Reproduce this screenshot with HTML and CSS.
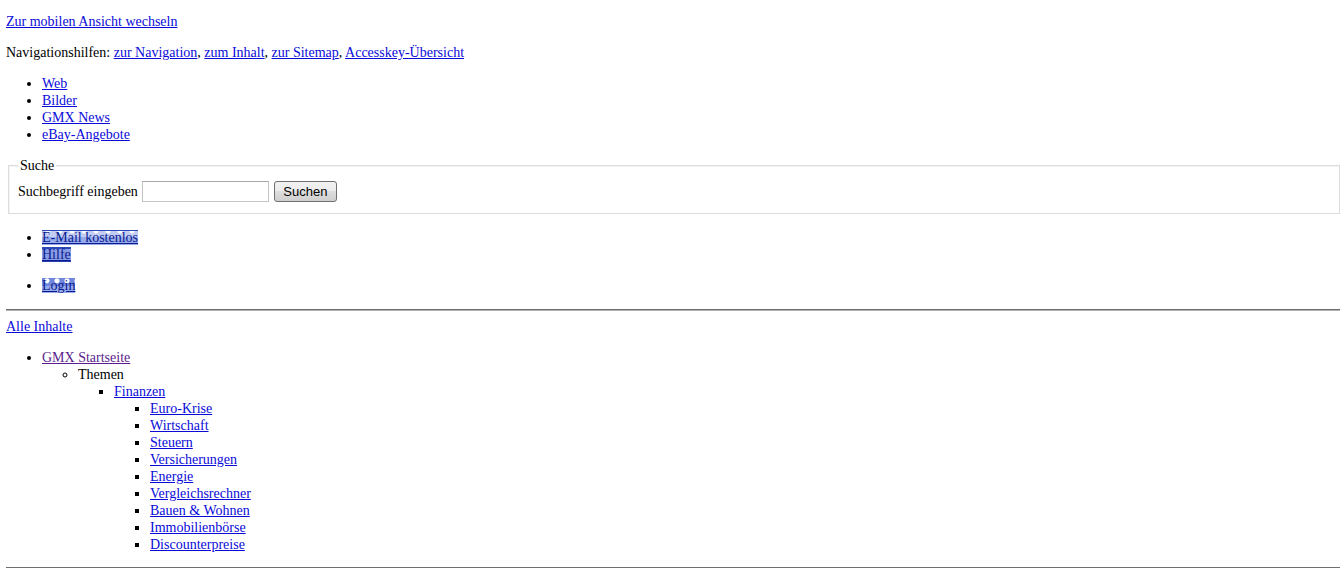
FILE: index.html
```html
<!DOCTYPE html>
<html lang="de">
<head>
<meta charset="utf-8">
<title>GMX</title>
<link rel="stylesheet" href="styles.css">
</head>
<body>
<p class="first"><a href="#">Zur mobilen Ansicht wechseln</a></p>
<p>Navigationshilfen: <a href="#">zur Navigation</a>, <a href="#">zum Inhalt</a>, <a href="#">zur Sitemap</a>, <a href="#">Accesskey-Übersicht</a></p>
<ul>
  <li><a href="#">Web</a></li>
  <li><a href="#">Bilder</a></li>
  <li><a href="#">GMX News</a></li>
  <li><a href="#">eBay-Angebote</a></li>
</ul>
<fieldset class="search">
  <legend>Suche</legend>
  <label for="q">Suchbegriff eingeben</label> <input id="q" class="search-input" type="text"> <button class="search-btn" type="button">Suchen</button>
</fieldset>
<ul class="service">
  <li><a class="sprite" href="#">E-Mail kostenlos</a></li>
  <li><a class="sprite dark" href="#">Hilfe</a></li>
</ul>
<ul>
  <li><a class="sprite dots" href="#">Login</a></li>
</ul>
<hr>
<p class="all"><a href="#">Alle Inhalte</a></p>
<ul>
  <li><a class="visited" href="#">GMX Startseite</a>
    <ul>
      <li>Themen
        <ul>
          <li><a href="#">Finanzen</a>
            <ul>
              <li><a href="#">Euro-Krise</a></li>
              <li><a href="#">Wirtschaft</a></li>
              <li><a href="#">Steuern</a></li>
              <li><a href="#">Versicherungen</a></li>
              <li><a href="#">Energie</a></li>
              <li><a href="#">Vergleichsrechner</a></li>
              <li><a href="#">Bauen &amp; Wohnen</a></li>
              <li><a href="#">Immobilienbörse</a></li>
              <li><a href="#">Discounterpreise</a></li>
            </ul>
          </li>
        </ul>
      </li>
    </ul>
  </li>
</ul>
<hr class="bottom">
</body>
</html>
```

FILE: styles.css
```css
html, body {
  margin: 0;
  padding: 0;
  background: #fff;
}
body {
  padding-left: 6px;
  font-family: "Liberation Serif", "Times New Roman", serif;
  font-size: 14px;
  line-height: 17px;
  color: #000;
}
a {
  color: #0a0ad8;
  text-decoration: underline;
}
a.visited {
  color: #5b1d8c;
}
p {
  margin: 14px 0;
}
p.first {
  margin-top: 13px;
}
ul {
  margin: 14px 0;
  padding-left: 36px;
  list-style: disc;
}
ul ul {
  margin: 0;
  list-style: circle;
}
ul ul ul {
  list-style: square;
}
ul.service {
  margin-top: 15px;
}
.search {
  margin: 0 0 0 2px;
  padding: 7px 9px 11px 9px;
  border: 1px solid #dcdcdc;
  box-shadow: inset 1px 1px 0 #f4f4f4;
}
.search legend {
  padding: 0 2px;
}
.search label {
  vertical-align: middle;
}
.search-input {
  box-sizing: border-box;
  width: 127px;
  height: 21px;
  margin: 0 0 0 1px;
  padding: 1px 2px;
  border: 1px solid #c4c4c4;
  border-top-color: #a8a8a8;
  vertical-align: middle;
  font: 13px "Liberation Sans", Arial, sans-serif;
}
.search-btn {
  box-sizing: border-box;
  width: 63px;
  height: 21px;
  margin: 0 0 0 1px;
  padding: 0;
  border: 1px solid #707070;
  border-radius: 3px;
  background: linear-gradient(#f2f2f2 0%, #ebebeb 50%, #dddddd 50%, #cfcfcf 100%);
  color: #000;
  vertical-align: middle;
  font: 13px "Liberation Sans", Arial, sans-serif;
}
a.sprite {
  color: #0a1a90;
  background:
    linear-gradient(#2c48b8 0 1px, transparent 1px),
    radial-gradient(circle at 50% 0, #ffffff 0 2px, transparent 3px) 0 1px / 12px 6px repeat-x,
    linear-gradient(#c3cdf3 0 7px, #98abea 7px 15px, #2740b0 15px);
}
a.sprite.dark {
  color: #0a1a90;
  background:
    linear-gradient(#2c48b8 0 2px, #889ce4 2px 14px, #2740b0 14px);
}
a.sprite.dots {
  background:
    radial-gradient(circle at 50% 35%, #ffffff 0 2px, transparent 3px) 0 0 / 10px 8px repeat-x,
    linear-gradient(#6f86da 0 8px, #98abea 8px 15px, #2740b0 15px);
}
hr {
  margin: 15px 0 7px 0;
  height: 0;
  border: 0;
  border-top: 1px solid #6e6e6e;
  border-bottom: 1px solid #b0b0b0;
}
hr.bottom {
  margin: 13px 0 0 0;
}
p.all {
  margin-top: 7px;
}
```
